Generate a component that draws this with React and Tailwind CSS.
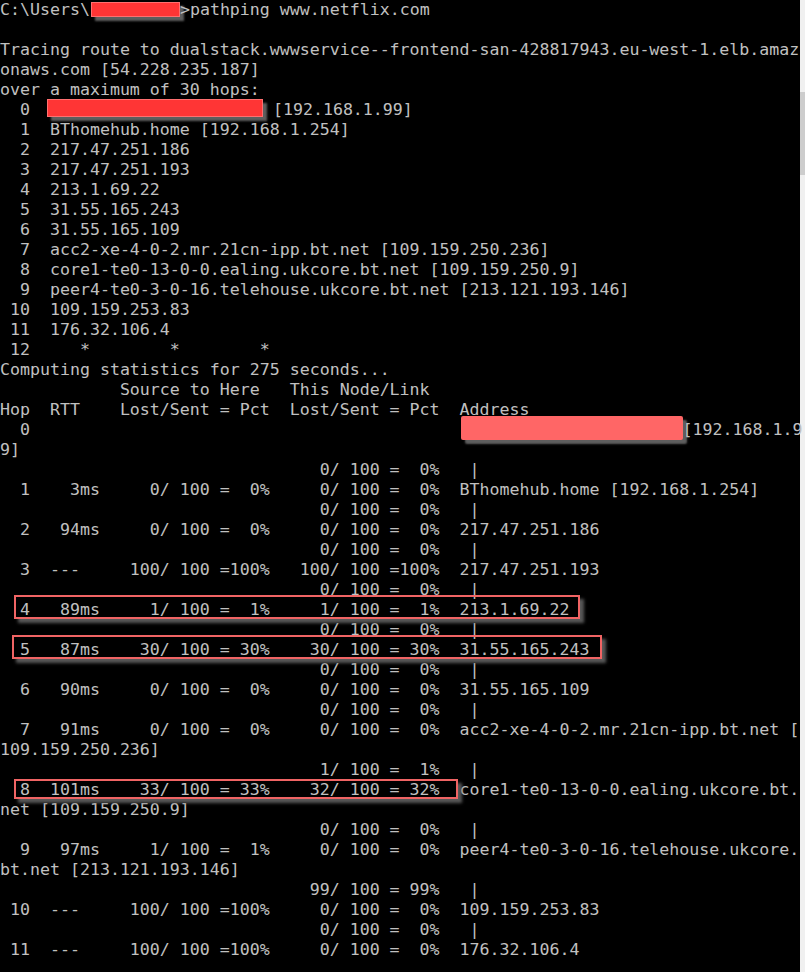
const Redact = ({ className }) => (
  <span className={`inline-block align-top shadow-[4px_4px_2px_rgba(110,110,110,0.85)] ${className}`} />
);

const lines = [
  ['C:\\Users\\', <Redact key="r" className="ml-px mt-[2px] w-[89px] h-[15px] bg-[#ff3535] border border-[#ff7070]" />, '>pathping www.netflix.com'],
  '',
  'Tracing route to dualstack.wwwservice--frontend-san-428817943.eu-west-1.elb.amaz',
  'onaws.com [54.228.235.187]',
  'over a maximum of 30 hops:',
  ['  0  ', <Redact key="r" className="-ml-[3px] mt-[-1px] w-[216px] h-[18px] bg-[#ff3535] border border-[#ff7070]" />, ' [192.168.1.99]'],
  '  1  BThomehub.home [192.168.1.254]',
  '  2  217.47.251.186',
  '  3  217.47.251.193',
  '  4  213.1.69.22',
  '  5  31.55.165.243',
  '  6  31.55.165.109',
  '  7  acc2-xe-4-0-2.mr.21cn-ipp.bt.net [109.159.250.236]',
  '  8  core1-te0-13-0-0.ealing.ukcore.bt.net [109.159.250.9]',
  '  9  peer4-te0-3-0-16.telehouse.ukcore.bt.net [213.121.193.146]',
  ' 10  109.159.253.83',
  ' 11  176.32.106.4',
  ' 12     *        *        *',
  'Computing statistics for 275 seconds...',
  '            Source to Here   This Node/Link',
  'Hop  RTT    Lost/Sent = Pct  Lost/Sent = Pct  Address',
  ['  0'.padEnd(46), <Redact key="r" className="ml-px mt-[-4px] w-[222px] h-[24px] rounded-[2px] bg-[#ff6666]" />, '[192.168.1.9'],
  '9]',
  '                                0/ 100 =  0%   |',
  '  1    3ms     0/ 100 =  0%     0/ 100 =  0%  BThomehub.home [192.168.1.254]',
  '                                0/ 100 =  0%   |',
  '  2   94ms     0/ 100 =  0%     0/ 100 =  0%  217.47.251.186',
  '                                0/ 100 =  0%   |',
  '  3  ---     100/ 100 =100%   100/ 100 =100%  217.47.251.193',
  '                                0/ 100 =  0%   |',
  '  4   89ms     1/ 100 =  1%     1/ 100 =  1%  213.1.69.22',
  '                                0/ 100 =  0%   |',
  '  5   87ms    30/ 100 = 30%    30/ 100 = 30%  31.55.165.243',
  '                                0/ 100 =  0%   |',
  '  6   90ms     0/ 100 =  0%     0/ 100 =  0%  31.55.165.109',
  '                                0/ 100 =  0%   |',
  '  7   91ms     0/ 100 =  0%     0/ 100 =  0%  acc2-xe-4-0-2.mr.21cn-ipp.bt.net [',
  '109.159.250.236]',
  '                                1/ 100 =  1%   |',
  '  8  101ms    33/ 100 = 33%    32/ 100 = 32%  core1-te0-13-0-0.ealing.ukcore.bt.',
  'net [109.159.250.9]',
  '                                0/ 100 =  0%   |',
  '  9   97ms     1/ 100 =  1%     0/ 100 =  0%  peer4-te0-3-0-16.telehouse.ukcore.',
  'bt.net [213.121.193.146]',
  '                               99/ 100 = 99%   |',
  ' 10  ---     100/ 100 =100%     0/ 100 =  0%  109.159.253.83',
  '                                0/ 100 =  0%   |',
  ' 11  ---     100/ 100 =100%     0/ 100 =  0%  176.32.106.4',
  '',
];

export default function App() {
  return (
    <div className="flex h-[972px] w-[805px] overflow-hidden bg-black">
      <div className="relative w-[800px] h-full">
        <pre className="m-0 font-['DejaVu_Sans_Mono','Liberation_Mono',monospace] text-[16.6px] leading-[20px] text-[#c0c0c0]">
          {lines.map((l, i) => (
            <div key={i} className="h-[20px] whitespace-pre">{l}</div>
          ))}
        </pre>

        {/* highlight boxes drawn over the console */}
        <div className="absolute left-[14px] top-[595px] w-[566px] h-[24px] border-2 border-[#f06464] shadow-[4px_4px_3px_rgba(110,110,110,0.8)]" />
        <div className="absolute left-[12px] top-[635px] w-[590px] h-[24px] border-2 border-[#f06464] shadow-[4px_4px_3px_rgba(110,110,110,0.8)]" />
        <div className="absolute left-[14px] top-[779px] w-[444px] h-[20px] border-2 border-[#f06464] shadow-[4px_4px_3px_rgba(110,110,110,0.8)]" />
      </div>
      <div className="w-[5px] h-full bg-[#f0f0f0] pt-[92px]">
        <div className="h-[83px] w-full bg-[#cdcdcd]" />
      </div>
    </div>
  );
}
